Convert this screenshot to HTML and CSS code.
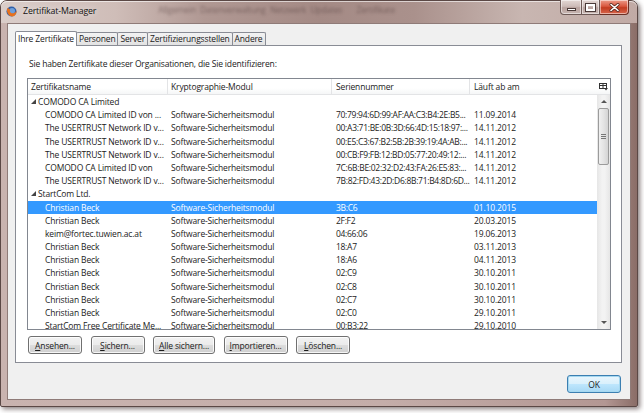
FILE: index.html
```html
<!DOCTYPE html>
<html lang="de">
  <head>
    <meta charset="UTF-8" />
    <title>Zertifikat-Manager</title>
    <link rel="stylesheet" href="styles.css">
  </head>
  <body>
    <div class="window">
      <div class="titlebar">
        <svg class="app-icon" width="11" height="11" viewBox="0 0 11 11">
          <circle cx="5.5" cy="5.5" r="5" fill="#2f5fa8" />
          <circle cx="6" cy="5" r="3" fill="#6fa0dc" />
          <path d="M1 4 C1 8 4 10.6 6.5 10.4 C9.5 10 10.8 7 10.4 4.5 C9.5 6.8 7.5 7.8 5.5 7.2 C3.8 6.6 3.5 4.8 4.2 3.6 C2.8 3.6 2 2.4 2.2 1.6 C1.4 2.2 1 3 1 4 Z" fill="#e8711c" />
        </svg>
        <span class="title">Zertifikat-Manager</span>
        <span class="glass-text">Allgemein &nbsp;Datenverwaltung &nbsp;Netzwerk &nbsp;Updates</span>
        <span class="glass-text short">Zertifikate</span>
        <div class="caption-buttons">
          <div class="cap min"><i></i></div>
          <div class="cap max"><i></i></div>
          <div class="cap close">
            <svg width="11" height="9" viewBox="0 0 11 9">
              <path d="M2 1.5 L9 7.5 M9 1.5 L2 7.5" stroke="#5a2a22" stroke-width="3" stroke-linecap="round" />
              <path d="M2 1.5 L9 7.5 M9 1.5 L2 7.5" stroke="#fff" stroke-width="1.6" stroke-linecap="round" />
            </svg>
          </div>
        </div>
      </div>

      <div class="client">
        <div class="tabs">
          <div class="tab active">Ihre Zertifikate</div>
          <div class="tab">Personen</div>
          <div class="tab">Server</div>
          <div class="tab">Zertifizierungsstellen</div>
          <div class="tab">Andere</div>
        </div>

        <div class="panel">
          <p class="intro">Sie haben Zertifikate dieser Organisationen, die Sie identifizieren:</p>

          <div class="tree">
            <div class="tree-head">
              <div class="col c1">Zertifikatsname</div>
              <div class="col c2">Kryptographie-Modul</div>
              <div class="col c3">Seriennummer</div>
              <div class="col c4">Läuft ab am</div>
              <div class="picker">
                <svg width="9" height="8" viewBox="0 0 9 8">
                  <rect x="0.5" y="0.5" width="7" height="5" fill="#fff" stroke="#333" />
                  <path d="M0.5 2.5 H7.5 M4 0.5 V5.5" stroke="#333" />
                  <path d="M5 5 H9 L7 7.5 Z" fill="#333" />
                </svg>
              </div>
            </div>

            <div class="tree-body">
              <div class="rows">
                <div class="row group"><div class="col c1"><span class="twisty"></span>COMODO CA Limited</div></div>
                <div class="row"><div class="col c1">COMODO CA Limited ID von ...</div><div class="col c2">Software-Sicherheitsmodul</div><div class="col c3">70:79:94:6D:99:AF:AA:C3:B4:2E:B5...</div><div class="col c4">11.09.2014</div></div>
                <div class="row"><div class="col c1">The USERTRUST Network ID v...</div><div class="col c2">Software-Sicherheitsmodul</div><div class="col c3">00:A3:71:BE:0B:3D:66:4D:15:18:97:...</div><div class="col c4">14.11.2012</div></div>
                <div class="row"><div class="col c1">The USERTRUST Network ID v...</div><div class="col c2">Software-Sicherheitsmodul</div><div class="col c3">00:E5:C3:67:B2:5B:2B:39:19:4A:AB:...</div><div class="col c4">14.11.2012</div></div>
                <div class="row"><div class="col c1">The USERTRUST Network ID v...</div><div class="col c2">Software-Sicherheitsmodul</div><div class="col c3">00:CB:F9:FB:12:BD:05:77:20:49:12:...</div><div class="col c4">14.11.2012</div></div>
                <div class="row"><div class="col c1">COMODO CA Limited ID von</div><div class="col c2">Software-Sicherheitsmodul</div><div class="col c3">7C:6B:BE:02:32:D2:43:FA:26:E5:83:...</div><div class="col c4">14.11.2012</div></div>
                <div class="row"><div class="col c1">The USERTRUST Network ID v...</div><div class="col c2">Software-Sicherheitsmodul</div><div class="col c3">7B:82:FD:43:2D:D6:8B:71:B4:8D:6D...</div><div class="col c4">14.11.2012</div></div>
                <div class="row group"><div class="col c1"><span class="twisty"></span>StartCom Ltd.</div></div>
                <div class="row selected"><div class="col c1">Christian Beck</div><div class="col c2">Software-Sicherheitsmodul</div><div class="col c3">3B:C6</div><div class="col c4">01.10.2015</div></div>
                <div class="row"><div class="col c1">Christian Beck</div><div class="col c2">Software-Sicherheitsmodul</div><div class="col c3">2F:F2</div><div class="col c4">20.03.2015</div></div>
                <div class="row"><div class="col c1">keim@fortec.tuwien.ac.at</div><div class="col c2">Software-Sicherheitsmodul</div><div class="col c3">04:66:06</div><div class="col c4">19.06.2013</div></div>
                <div class="row"><div class="col c1">Christian Beck</div><div class="col c2">Software-Sicherheitsmodul</div><div class="col c3">18:A7</div><div class="col c4">03.11.2013</div></div>
                <div class="row"><div class="col c1">Christian Beck</div><div class="col c2">Software-Sicherheitsmodul</div><div class="col c3">18:A6</div><div class="col c4">04.11.2013</div></div>
                <div class="row"><div class="col c1">Christian Beck</div><div class="col c2">Software-Sicherheitsmodul</div><div class="col c3">02:C9</div><div class="col c4">30.10.2011</div></div>
                <div class="row"><div class="col c1">Christian Beck</div><div class="col c2">Software-Sicherheitsmodul</div><div class="col c3">02:C8</div><div class="col c4">30.10.2011</div></div>
                <div class="row"><div class="col c1">Christian Beck</div><div class="col c2">Software-Sicherheitsmodul</div><div class="col c3">02:C7</div><div class="col c4">30.10.2011</div></div>
                <div class="row"><div class="col c1">Christian Beck</div><div class="col c2">Software-Sicherheitsmodul</div><div class="col c3">02:C0</div><div class="col c4">29.10.2011</div></div>
                <div class="row"><div class="col c1">StartCom Free Certificate Me...</div><div class="col c2">Software-Sicherheitsmodul</div><div class="col c3">00:B3:22</div><div class="col c4">29.10.2010</div></div>
              </div>
              <div class="scrollbar">
                <div class="arrow up"></div>
                <div class="thumb"><i></i><i></i><i></i></div>
                <div class="track"></div>
                <div class="arrow down"></div>
              </div>
            </div>
          </div>

          <div class="actions">
            <button class="btn"><u>A</u>nsehen...</button>
            <button class="btn"><u>S</u>ichern...</button>
            <button class="btn"><u>A</u>lle sichern...</button>
            <button class="btn"><u>I</u>mportieren...</button>
            <button class="btn"><u>L</u>öschen...</button>
          </div>
        </div>

        <div class="footer">
          <button class="btn ok">OK</button>
        </div>
      </div>
    </div>
  </body>
</html>
```

FILE: styles.css
```css
* {
  margin: 0;
  padding: 0;
  box-sizing: border-box;
}

body {
  font-family: "Open Sans", "Noto Sans", sans-serif;
  font-size: 8.5px;
  letter-spacing: -0.15px;
  color: #1b1b1b;
  background: #fff;
  width: 644px;
  height: 413px;
  overflow: hidden;
}

.window {
  width: 638px;
  height: 407px;
  border: 1px solid #5b4845;
  border-radius: 7px 7px 2px 2px;
  padding: 0 6px 6px 6px;
  display: flex;
  flex-direction: column;
  background: linear-gradient(90deg, #c9b3af 0%, #c4ada9 60%, #b39793 95%, #8a6d67 100%);
  box-shadow: 2px 2px 5px rgba(40, 20, 20, 0.55);
}

/* title bar */
.titlebar {
  height: 22px;
  display: flex;
  align-items: flex-start;
  margin: 0 -6px;
  padding-left: 5px;
  border-radius: 6px 6px 0 0;
  background: linear-gradient(90deg, #dacdc9 0%, #cfbdb8 18%, #b09893 32%, #a48a85 50%, #aa918c 65%, #c8b6b1 82%, #c1aaa5 100%);
  box-shadow: inset 0 1px 0 rgba(255, 255, 255, 0.6);
}

.app-icon {
  margin-top: 5px;
  flex: none;
}

.title {
  margin-left: 6px;
  margin-top: 4px;
  font-size: 8.8px;
  color: #111;
  text-shadow: 0 0 6px rgba(255, 255, 255, 0.9);
}

.glass-text {
  margin-left: 62px;
  margin-top: 3px;
  color: rgba(60, 40, 40, 0.45);
  filter: blur(1.4px);
  white-space: nowrap;
}

.glass-text.short {
  margin-left: 14px;
}

.caption-buttons {
  margin-left: auto;
  margin-right: 8px;
  display: flex;
  margin-top: -1px;
}

.cap {
  height: 15px;
  border: 1px solid #6e5a57;
  border-top: none;
  display: flex;
  align-items: center;
  justify-content: center;
  background: linear-gradient(#e3d7d4 0%, #cdbcb8 45%, #b9a39f 55%, #c7b5b1 100%);
  box-shadow: inset 0 0 0 1px rgba(255, 255, 255, 0.5);
}

.cap.min {
  width: 22px;
  border-radius: 0 0 0 4px;
}

.cap.max {
  width: 18px;
  border-left: none;
}

.cap.close {
  width: 29px;
  border-left: none;
  border-radius: 0 0 4px 0;
  background: linear-gradient(#ec9b8a 0%, #d9573f 45%, #c23b21 55%, #d8664c 100%);
  border-color: #6b2f25;
}

.cap.min i {
  width: 9px;
  height: 3px;
  margin-top: 4px;
  background: #fff;
  border: 1px solid #4a3a38;
}

.cap.max i {
  width: 9px;
  height: 7px;
  border: 2px solid #fff;
  outline: 1px solid #4a3a38;
}

/* client area */
.client {
  flex: 1;
  background: #f0f0f0;
  border: 1px solid #8f7b78;
  padding: 7px 8px 0 7px;
  display: flex;
  flex-direction: column;
}

.tabs {
  display: flex;
  align-items: flex-end;
  height: 14px;
  position: relative;
  z-index: 1;
}

.tab {
  height: 13px;
  padding: 0 2px;
  line-height: 12px;
  border: 1px solid #898c95;
  border-bottom: none;
  margin-left: -1px;
  background: linear-gradient(#f3f3f3, #e2e2e2);
  border-radius: 2px 2px 0 0;
  white-space: nowrap;
}

.tab:first-child {
  margin-left: 0;
}

.tab.active {
  height: 15px;
  margin-bottom: -1px;
  padding-top: 1px;
  background: #fff;
}

.panel {
  height: 318px;
  background: #fff;
  border: 1px solid #898c95;
  padding: 11px 10px 0 11px;
}

.intro {
  line-height: 13px;
  padding-left: 2px;
  margin-bottom: 8px;
}

/* tree */
.tree {
  height: 252px;
  border: 1px solid #828790;
  display: flex;
  flex-direction: column;
}

.tree-head {
  height: 16px;
  display: flex;
  border-bottom: 1px solid #e3e4e6;
  background: linear-gradient(#fff 0%, #fff 60%, #f5f6f7 100%);
}

.tree-head .col {
  border-right: 1px solid #e3e4e6;
  line-height: 16px;
}

.col {
  flex: none;
  white-space: nowrap;
  overflow: hidden;
}

.c1 {
  width: 140px;
  padding-left: 3px;
}

.c2 {
  width: 164px;
  padding-left: 3px;
}

.c3 {
  width: 138px;
  padding-left: 4px;
}

.row .c3 {
  letter-spacing: -0.3px;
}

.c4 {
  width: 127px;
  padding-left: 4px;
}

.tree-head .c4 {
  border-right: none;
}

.picker {
  flex: 1;
  display: flex;
  justify-content: center;
  padding-top: 4px;
}

.tree-body {
  flex: 1;
  display: flex;
  overflow: hidden;
}

.rows {
  flex: 1;
  overflow: hidden;
}

.row {
  height: 13.2px;
  line-height: 13.2px;
  display: flex;
}

.row .c1 {
  padding-left: 17px;
}

.row.group .c1 {
  width: 300px;
  padding-left: 3px;
  display: flex;
  align-items: center;
}

.twisty {
  width: 0;
  height: 0;
  border-left: 5px solid transparent;
  border-bottom: 5px solid #444;
  margin-right: 2px;
}

.row.selected {
  background: #3399ff;
  color: #fff;
}

/* scrollbar */
.scrollbar {
  width: 13px;
  flex: none;
  display: flex;
  flex-direction: column;
  background: linear-gradient(90deg, #e6e6e6, #f3f3f3 40%, #f3f3f3 60%, #e6e6e6);
}

.arrow {
  height: 13px;
  display: flex;
  align-items: center;
  justify-content: center;
}

.arrow::before {
  content: "";
  border-left: 3px solid transparent;
  border-right: 3px solid transparent;
}

.arrow.up::before {
  border-bottom: 3px solid #555;
}

.arrow.down::before {
  border-top: 3px solid #555;
}

.thumb {
  height: 57px;
  margin: 0 1px;
  border: 1px solid #9b9b9b;
  border-radius: 2px;
  background: linear-gradient(90deg, #f0f0f0, #e4e4e4 50%, #d4d4d4);
  display: flex;
  flex-direction: column;
  align-items: center;
  justify-content: center;
  gap: 1px;
}

.thumb i {
  width: 5px;
  height: 1px;
  background: #777;
}

.track {
  flex: 1;
}

/* buttons */
.actions {
  display: flex;
  gap: 8.5px;
  margin-top: 6px;
  margin-left: 1px;
}

.btn {
  font-family: inherit;
  font-size: 8.5px;
  letter-spacing: -0.15px;
  color: #1b1b1b;
  height: 18px;
  min-width: 54px;
  padding: 0 5px;
  border: 1px solid #707070;
  border-radius: 3px;
  background: linear-gradient(#f2f2f2 0%, #ebebeb 49%, #dddddd 51%, #cfcfcf 100%);
  box-shadow: inset 0 0 0 1px rgba(255, 255, 255, 0.8);
}

.footer {
  display: flex;
  justify-content: flex-end;
  margin-top: 12px;
  padding-right: 1px;
}

.btn.ok {
  width: 53px;
  border-color: #3c7fb1;
  box-shadow: inset 0 0 0 1px #a5d8f0;
  background: linear-gradient(#eaf6fd 0%, #d9f0fc 49%, #bee6fd 51%, #a7d9f5 100%);
}
```
